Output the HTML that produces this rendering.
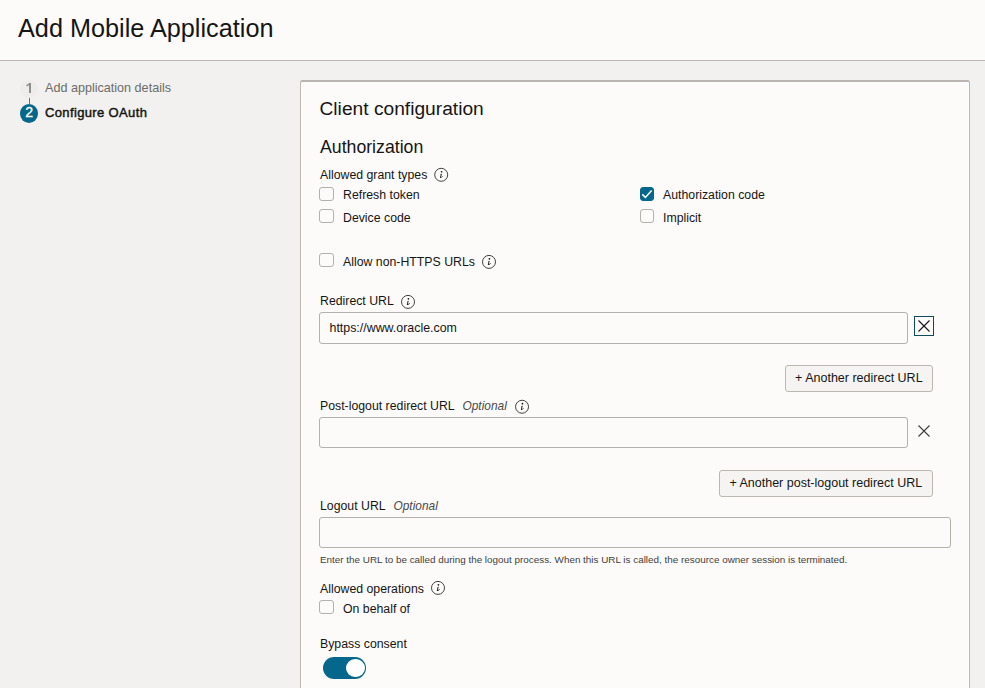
<!DOCTYPE html>
<html><head><meta charset="utf-8">
<style>
*{box-sizing:border-box;margin:0;padding:0}
html,body{width:985px;height:688px;overflow:hidden}
body{background:#f2f1ef;font-family:"Liberation Sans",sans-serif;color:#161513;position:relative}
.a{position:absolute;white-space:nowrap}
#hdr{left:0;top:0;width:985px;height:61px;background:#fcfbfa;border-bottom:1px solid #bcb7b1}
.step{width:18px;height:18px;border-radius:50%;text-align:center;font-size:12.6px;line-height:18px}
#s1{left:20px;top:80px;width:18px;height:17.6px;background:#eeedeb;color:#8d8b89}
#s2{left:20px;top:104px;width:18.2px;height:19px;background:#04678b;color:#fff;font-size:14.2px;line-height:17.4px;-webkit-text-stroke:0.3px #fff}
#conn{left:29px;top:98px;width:1px;height:6px;background:#6f6e6c}
#card{left:300px;top:80px;width:670px;height:640px;background:#fcfbfa;border:1px solid #bcb7b1;border-top:2px solid #b9b4af;border-radius:2.5px;box-shadow:inset 0 1px 0 #fff,inset 1px 0 0 #fff,inset -1px 0 0 #fff}
.cb{width:15px;height:14px;border:1px solid #b4b0ab;border-radius:3px;background:#fcfbfa}
.cbon{background:#04678b;border-color:#04678b}
.inp{background:#fcfbfa;border:1px solid #b4b0ab;border-radius:3px}
.btn{background:#f5f4f2;border:1px solid #bcb7b1;border-radius:3px}
</style></head><body>
<div id="hdr" class="a"></div>
<div class="a " style="left:18px;top:12.25px;font-size:25.25px;line-height:32px;">Add Mobile Application</div>
<div id="s1" class="a step"></div><svg class="a" style="left:20px;top:80px" width="18" height="18" viewBox="0 0 18 18"><path d="M10 3 V13" stroke="#8c8b89" stroke-width="1.9"/><path d="M10.2 3.3 L6.6 5.9" stroke="#8c8b89" stroke-width="1.5"/></svg>
<div id="conn" class="a"></div>
<div id="s2" class="a step">2</div>
<div class="a " style="left:45px;top:80.23px;font-size:12.6px;line-height:16px;color:#6d6b69">Add application details</div>
<div class="a " style="left:45px;top:105.30px;font-size:13.0px;line-height:16px;-webkit-text-stroke:0.45px #161513;letter-spacing:0.36px">Configure OAuth</div>
<div id="card" class="a"></div>
<div class="a " style="left:319.5px;top:96.75px;font-size:19.2px;line-height:24px;">Client configuration</div>
<div class="a " style="left:320px;top:136.47px;font-size:17.7px;line-height:22px;">Authorization</div>
<div class="a " style="left:320px;top:168.04px;font-size:12.3px;line-height:15px;">Allowed grant types</div>
<svg class="a" style="left:433px;top:166px" width="16" height="16" viewBox="0 0 16 16"><circle cx="8.20" cy="8.80" r="6.5" fill="none" stroke="#2e2d2b" stroke-width="0.9"/><g transform="translate(0.60 1.00)"><circle cx="8.0" cy="4.75" r="0.85" fill="#161513"/><path d="M6.75 7.1 L8.35 6.75 L7.35 10.0 Q7.7 10.05 9.3 9.0 L9.45 9.35 Q7.8 11.0 6.95 11.0 Q6.2 11.0 6.45 10.2 L7.2 7.4 L6.7 7.45 Z" fill="#161513"/></g></svg>
<div class="a cb" style="left:319px;top:187px;width:15px"></div>
<div class="a " style="left:343px;top:187.94px;font-size:12.3px;line-height:15px;">Refresh token</div>
<div class="a cb" style="left:319px;top:209px;width:15px"></div>
<div class="a " style="left:343px;top:210.64px;font-size:12.3px;line-height:15px;">Device code</div>
<div class="a cb cbon" style="left:640px;top:187px;width:14px"><svg width="14" height="14" viewBox="0 0 14 14" style="position:absolute;left:-1px;top:-1px"><path d="M2.3 7.4 L5.4 10.4 L11.6 3.6" fill="none" stroke="#fff" stroke-width="1.5"/></svg></div>
<div class="a " style="left:663px;top:188.04px;font-size:12.3px;line-height:15px;">Authorization code</div>
<div class="a cb" style="left:640px;top:209px;width:14px"></div>
<div class="a " style="left:663px;top:210.74px;font-size:12.3px;line-height:15px;">Implicit</div>
<div class="a cb" style="left:319px;top:253px;width:15px"></div>
<div class="a " style="left:343px;top:254.54px;font-size:12.3px;line-height:15px;">Allow non-HTTPS URLs</div>
<svg class="a" style="left:481px;top:253px" width="16" height="16" viewBox="0 0 16 16"><circle cx="8.00" cy="8.90" r="6.5" fill="none" stroke="#2e2d2b" stroke-width="0.9"/><g transform="translate(0.40 1.10)"><circle cx="8.0" cy="4.75" r="0.85" fill="#161513"/><path d="M6.75 7.1 L8.35 6.75 L7.35 10.0 Q7.7 10.05 9.3 9.0 L9.45 9.35 Q7.8 11.0 6.95 11.0 Q6.2 11.0 6.45 10.2 L7.2 7.4 L6.7 7.45 Z" fill="#161513"/></g></svg>
<div class="a " style="left:320px;top:294.04px;font-size:12.3px;line-height:15px;">Redirect URL</div>
<svg class="a" style="left:400px;top:293px" width="16" height="16" viewBox="0 0 16 16"><circle cx="8.00" cy="8.90" r="6.5" fill="none" stroke="#2e2d2b" stroke-width="0.9"/><g transform="translate(0.40 1.10)"><circle cx="8.0" cy="4.75" r="0.85" fill="#161513"/><path d="M6.75 7.1 L8.35 6.75 L7.35 10.0 Q7.7 10.05 9.3 9.0 L9.45 9.35 Q7.8 11.0 6.95 11.0 Q6.2 11.0 6.45 10.2 L7.2 7.4 L6.7 7.45 Z" fill="#161513"/></g></svg>
<div class="a inp" style="left:319px;top:312px;width:589px;height:32px"></div>
<div class="a " style="left:329.5px;top:319.50px;font-size:12.4px;line-height:16px;">https://www.oracle.com</div>
<div class="a" style="left:914px;top:316px;width:20px;height:20px;border:1px solid #0e4a60"></div>
<svg class="a" style="left:914px;top:316px" width="20" height="20" viewBox="0 0 20 20"><path d="M4.5 4.5 L15.5 15.5 M15.5 4.5 L4.5 15.5" stroke="#161513" stroke-width="1.1"/></svg>
<div class="a btn" style="left:785px;top:365px;width:148px;height:27px"></div>
<div class="a " style="left:795.1px;top:369.57px;font-size:12.5px;line-height:16px;">+ Another redirect URL</div>
<div class="a " style="left:320px;top:399.04px;font-size:12.3px;line-height:15px;">Post-logout redirect URL</div>
<div class="a " style="left:462.5px;top:399.18px;font-size:11.9px;line-height:15px;font-style:italic;color:#4a4947">Optional</div>
<svg class="a" style="left:514px;top:398px" width="16" height="16" viewBox="0 0 16 16"><circle cx="8.05" cy="8.75" r="6.5" fill="none" stroke="#2e2d2b" stroke-width="0.9"/><g transform="translate(0.45 0.95)"><circle cx="8.0" cy="4.75" r="0.85" fill="#161513"/><path d="M6.75 7.1 L8.35 6.75 L7.35 10.0 Q7.7 10.05 9.3 9.0 L9.45 9.35 Q7.8 11.0 6.95 11.0 Q6.2 11.0 6.45 10.2 L7.2 7.4 L6.7 7.45 Z" fill="#161513"/></g></svg>
<div class="a inp" style="left:319px;top:417px;width:589px;height:31px"></div>
<svg class="a" style="left:914px;top:421px" width="20" height="20" viewBox="0 0 20 20"><path d="M4.5 4.5 L15.5 15.5 M15.5 4.5 L4.5 15.5" stroke="#3e3d3b" stroke-width="1.1"/></svg>
<div class="a btn" style="left:719px;top:470px;width:214px;height:27px"></div>
<div class="a " style="left:729.4px;top:474.97px;font-size:12.5px;line-height:16px;">+ Another post-logout redirect URL</div>
<div class="a " style="left:320px;top:499.14px;font-size:12.3px;line-height:15px;">Logout URL</div>
<div class="a " style="left:393.5px;top:499.28px;font-size:11.9px;line-height:15px;font-style:italic;color:#4a4947">Optional</div>
<div class="a inp" style="left:319px;top:517px;width:632px;height:31px"></div>
<div class="a " style="left:320px;top:554.37px;font-size:9.9px;line-height:12px;color:#3f3e3c">Enter the URL to be called during the logout process. When this URL is called, the resource owner session is terminated.</div>
<div class="a " style="left:320px;top:581.94px;font-size:12.3px;line-height:15px;">Allowed operations</div>
<svg class="a" style="left:430px;top:579px" width="16" height="16" viewBox="0 0 16 16"><circle cx="8.00" cy="8.90" r="6.5" fill="none" stroke="#2e2d2b" stroke-width="0.9"/><g transform="translate(0.40 1.10)"><circle cx="8.0" cy="4.75" r="0.85" fill="#161513"/><path d="M6.75 7.1 L8.35 6.75 L7.35 10.0 Q7.7 10.05 9.3 9.0 L9.45 9.35 Q7.8 11.0 6.95 11.0 Q6.2 11.0 6.45 10.2 L7.2 7.4 L6.7 7.45 Z" fill="#161513"/></g></svg>
<div class="a cb" style="left:319px;top:600px;width:15px"></div>
<div class="a " style="left:343px;top:602.34px;font-size:12.3px;line-height:15px;">On behalf of</div>
<div class="a " style="left:320px;top:636.84px;font-size:12.3px;line-height:15px;">Bypass consent</div>
<div class="a" style="left:323px;top:657px;width:43px;height:22px;border-radius:11px;background:#04678b"></div>
<div class="a" style="left:346.4px;top:658.9px;width:18.3px;height:18.2px;border-radius:50%;background:#fff"></div>
</body></html>
